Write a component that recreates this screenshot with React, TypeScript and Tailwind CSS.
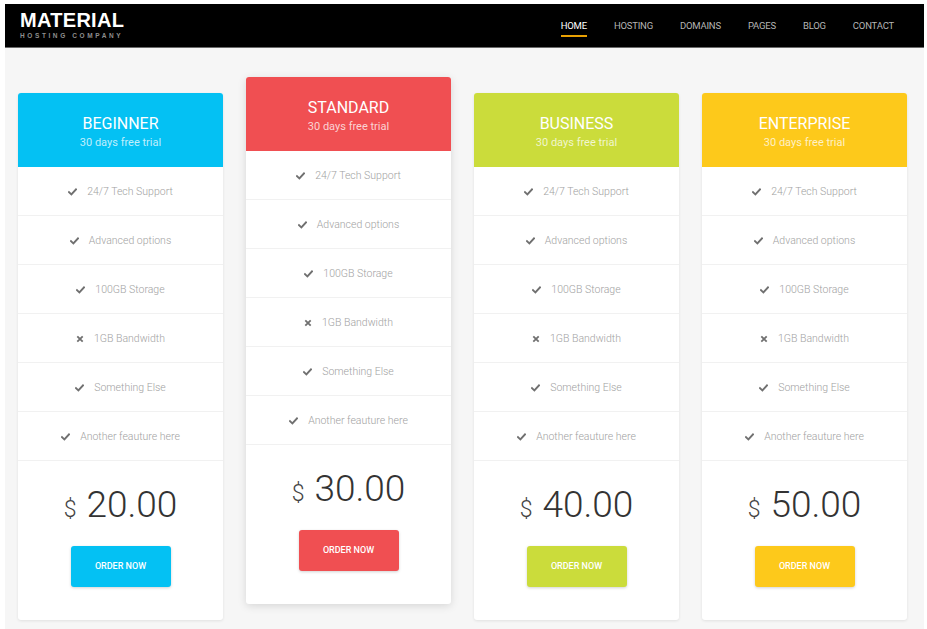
import React from 'react'

interface Plan {
  name: string
  price: string
  head: string
  button: string
  featured?: boolean
}

const plans: Plan[] = [
  { name: 'BEGINNER', price: '20.00', head: 'bg-[#04c1f3]', button: 'bg-[#04c1f3]' },
  { name: 'STANDARD', price: '30.00', head: 'bg-[#f04f52]', button: 'bg-[#f04f52]', featured: true },
  { name: 'BUSINESS', price: '40.00', head: 'bg-[#cbdc3b]', button: 'bg-[#cbdc3b]' },
  { name: 'ENTERPRISE', price: '50.00', head: 'bg-[#fdc91b]', button: 'bg-[#fdc91b]' },
]

const features: { label: string; ok: boolean }[] = [
  { label: '24/7 Tech Support', ok: true },
  { label: 'Advanced options', ok: true },
  { label: '100GB Storage', ok: true },
  { label: '1GB Bandwidth', ok: false },
  { label: 'Something Else', ok: true },
  { label: 'Another feauture here', ok: true },
]

const links = ['HOME', 'HOSTING', 'DOMAINS', 'PAGES', 'BLOG', 'CONTACT']

const CheckMark = () => (
  <svg width="9" height="8" viewBox="0 0 9 8" className="shrink-0">
    <path d="M1 4.2 L3.4 6.5 L8 1.4" fill="none" stroke="#707070" strokeWidth="1.9" strokeLinecap="square" />
  </svg>
)

const CrossMark = () => (
  <svg width="8" height="8" viewBox="0 0 8 8" className="shrink-0">
    <path d="M1.3 1.3 L6.7 6.7 M6.7 1.3 L1.3 6.7" fill="none" stroke="#707070" strokeWidth="1.8" />
  </svg>
)

const PlanCard: React.FC<{ plan: Plan }> = ({ plan }) => (
  <div
    className={`w-[205px] shrink-0 bg-white rounded-[3px] overflow-hidden ${
      plan.featured ? '-mt-4 shadow-[0_2px_8px_rgba(0,0,0,0.13)]' : 'shadow-[0_1px_3px_rgba(0,0,0,0.09)]'
    }`}
  >
    <div className={`${plan.head} h-[74px] flex flex-col items-center pt-[21px] text-white`}>
      <h3 className="text-[16px] leading-[20px]">{plan.name}</h3>
      <p className="text-[11px] leading-[16px] mt-[1px] text-white/75">30 days free trial</p>
    </div>
    <ul>
      {features.map((f) => (
        <li
          key={f.label}
          className="h-[49px] border-b border-[#f1f1f1] flex items-center justify-center gap-[10px] text-[10.5px] text-[#a2a2a2] font-light pt-[1px]"
        >
          {f.ok ? <CheckMark /> : <CrossMark />}
          <span>{f.label}</span>
        </li>
      ))}
    </ul>
    <div className="flex flex-col items-center pt-[26px] pb-[33px]">
      <div className="flex items-baseline text-[#333] font-light">
        <span className="text-[23px] leading-[36px] mr-[10px] text-[#444]">$</span>
        <span className="text-[37px] leading-[36px]">{plan.price}</span>
      </div>
      <button
        className={`${plan.button} mt-[18px] w-[100px] h-[41px] rounded-[3px] text-white text-[9px] font-medium shadow-[0_1px_3px_rgba(0,0,0,0.18)]`}
      >
        ORDER NOW
      </button>
    </div>
  </div>
)

export default function App() {
  return (
    <div className="w-[927px] h-[629px] bg-white pt-[4px] pl-[5px] pr-[3px] overflow-hidden font-['Roboto',sans-serif]">
      <div className="h-full bg-[#f6f6f6]">
        <header className="h-[44px] bg-black border-b border-[#6a6a6a] flex items-center justify-between pl-[15px] pr-[30px]">
          <div className="flex flex-col font-['Liberation_Sans',sans-serif]">
            <span className="text-white font-bold text-[20px] leading-[18px] tracking-[0.3px]">MATERIAL</span>
            <span className="text-[#8e8e8e] text-[6.5px] leading-[8px] mt-[3px] tracking-[2.6px] font-bold">
              HOSTING COMPANY
            </span>
          </div>
          <nav className="flex gap-[27px] text-[9.5px] tracking-[-0.2px] mt-[1px]">
            {links.map((l) => (
              <a key={l} className={`relative ${l === 'HOME' ? 'text-white' : 'text-[#b5b5b5]'}`}>
                {l}
                {l === 'HOME' && (
                  <span className="absolute left-0 right-0 -bottom-[4px] h-[2px] bg-[#e9a103]" />
                )}
              </a>
            ))}
          </nav>
        </header>
        <main className="flex items-start gap-[23px] pl-[13px] pt-[45px]">
          {plans.map((p) => (
            <PlanCard key={p.name} plan={p} />
          ))}
        </main>
      </div>
    </div>
  )
}
